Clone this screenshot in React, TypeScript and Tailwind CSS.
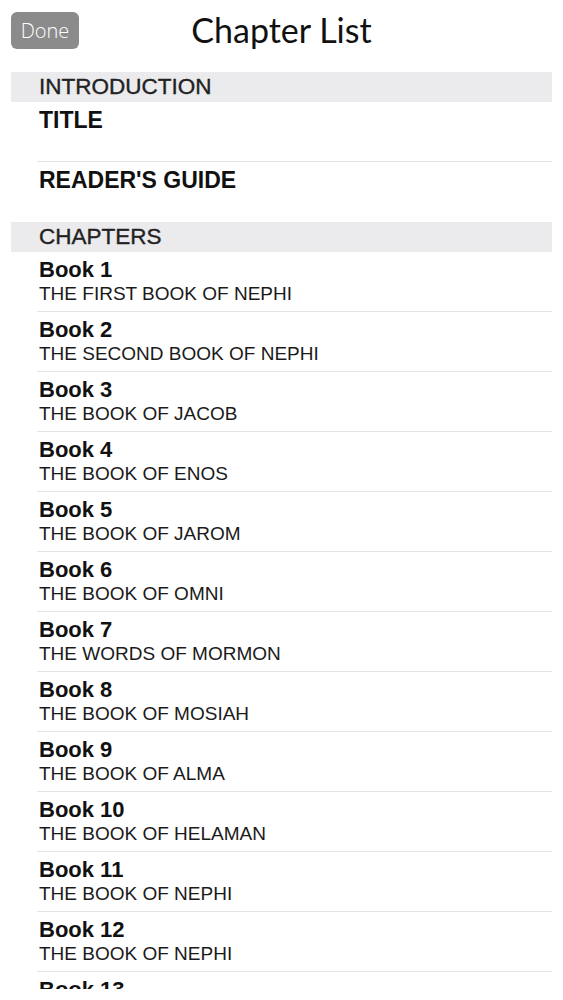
import React from "react";

const books: [string, string][] = [
  ["Book 1", "THE FIRST BOOK OF NEPHI"],
  ["Book 2", "THE SECOND BOOK OF NEPHI"],
  ["Book 3", "THE BOOK OF JACOB"],
  ["Book 4", "THE BOOK OF ENOS"],
  ["Book 5", "THE BOOK OF JAROM"],
  ["Book 6", "THE BOOK OF OMNI"],
  ["Book 7", "THE WORDS OF MORMON"],
  ["Book 8", "THE BOOK OF MOSIAH"],
  ["Book 9", "THE BOOK OF ALMA"],
  ["Book 10", "THE BOOK OF HELAMAN"],
  ["Book 11", "THE BOOK OF NEPHI"],
  ["Book 12", "THE BOOK OF NEPHI"],
  ["Book 13", "THE BOOK OF MORMON"],
];

function SectionHeader({ label }: { label: string }) {
  return (
    <div className="h-[30px] bg-[#ebebed] pl-[28px] text-[22.5px] leading-[30px] text-[#222] [-webkit-text-stroke:0.35px_#222]">
      {label}
    </div>
  );
}

export default function App() {
  return (
    <div className="w-[563px] h-[1000px] bg-white overflow-hidden" style={{ fontFamily: '"Liberation Sans", Arial, sans-serif' }}>
      <div className="relative h-[72px] flex items-start justify-center">
        <button className="absolute left-[11px] top-[12px] w-[68px] h-[37px] rounded-[6px] bg-[#8b8b8b] text-white text-[20px] leading-[37px] font-light" style={{ fontFamily: '"Open Sans", sans-serif' }}>
          Done
        </button>
        <div className="mt-[9px] text-[34px] leading-[42px] text-[#111]" style={{ fontFamily: 'Lato, "Open Sans", sans-serif' }}>
          Chapter List
        </div>
      </div>
      <div className="ml-[11px] w-[541px] h-[917px] overflow-hidden">
        <SectionHeader label="INTRODUCTION" />
        <div className="ml-[26px] h-[60px] border-b border-[#e4e4e6] pt-[5px] pl-[2px] text-[23px] leading-[27px] font-bold text-[#111]">
          TITLE
        </div>
        <div className="ml-[26px] h-[60px] pt-[5px] pl-[2px] text-[23px] leading-[27px] font-bold text-[#111]">
          READER'S GUIDE
        </div>
        <SectionHeader label="CHAPTERS" />
        {books.map(([t, s]) => (
          <div key={t} className="ml-[26px] h-[60px] border-b border-[#e4e4e6] pt-[5px] pl-[2px]">
            <div className="text-[22px] leading-[26px] font-bold text-[#111]">{t}</div>
            <div className="text-[19px] leading-[22px] text-[#1a1a1a]">{s}</div>
          </div>
        ))}
      </div>
    </div>
  );
}
